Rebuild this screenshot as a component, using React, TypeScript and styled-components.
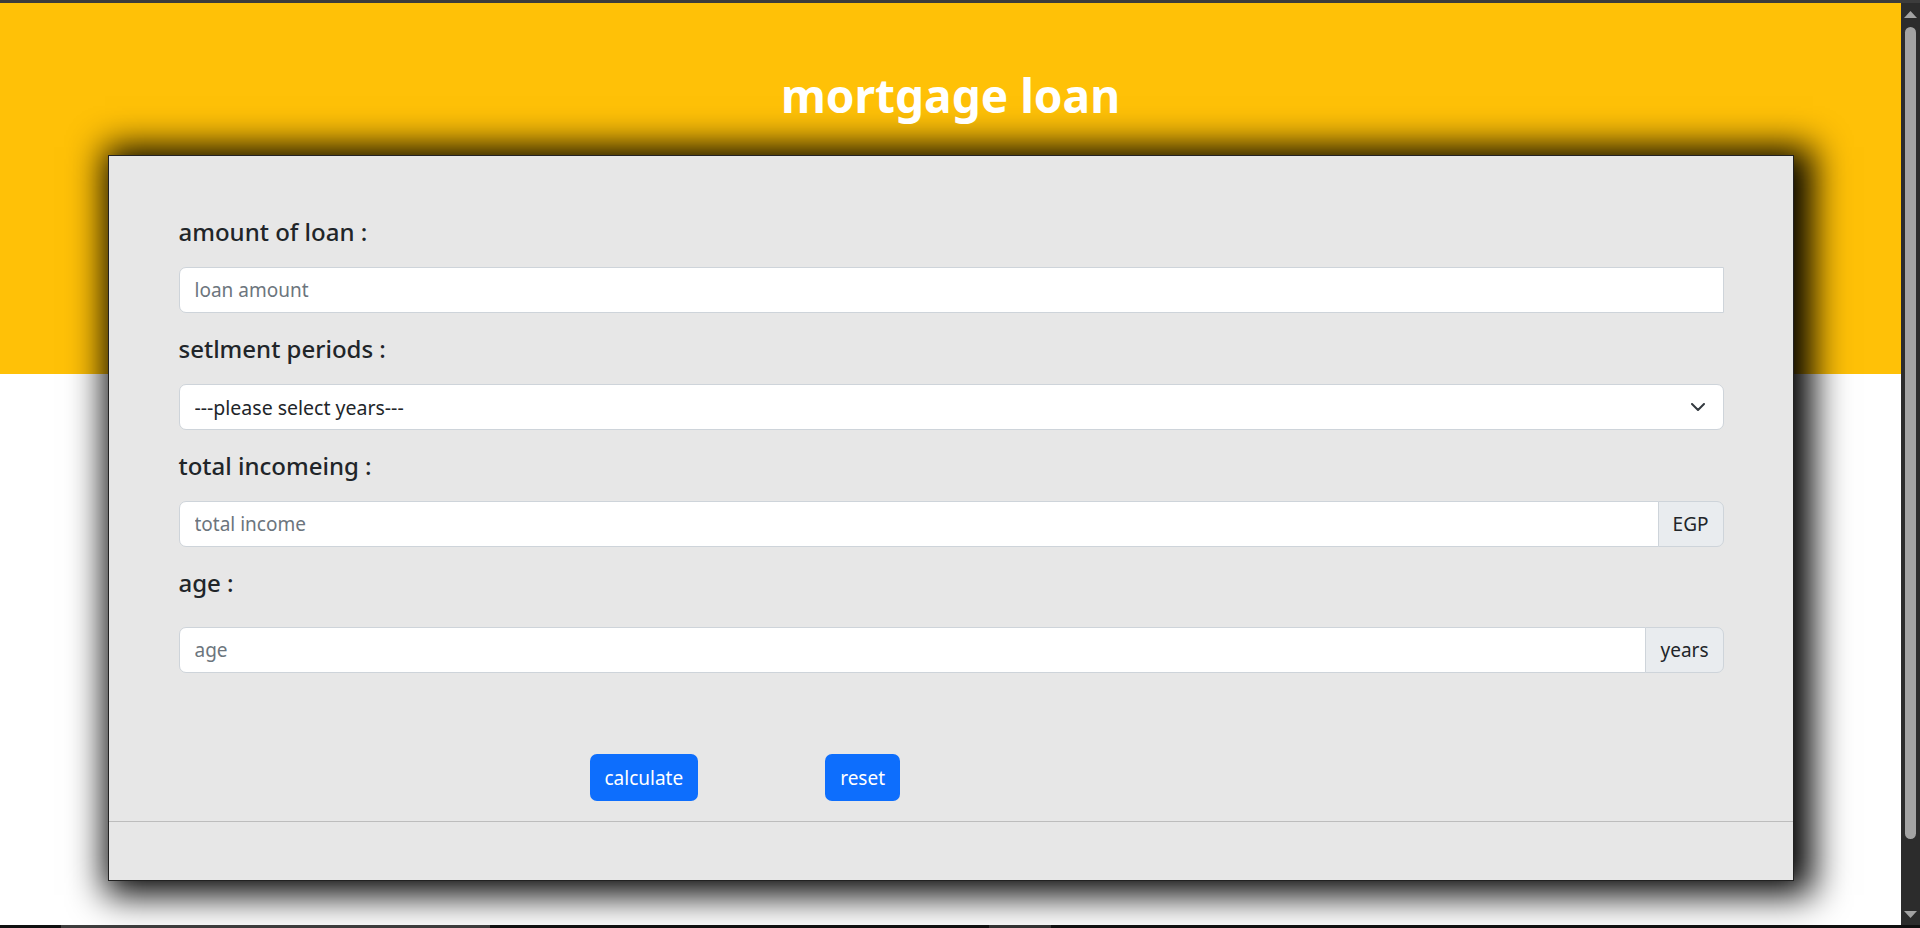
import React from "react";
import styled, { createGlobalStyle } from "styled-components";

const FONT = `"Noto Sans", "Open Sans", "Liberation Sans", sans-serif`;

const GlobalStyle = createGlobalStyle`
  html, body {
    margin: 0;
    padding: 0;
    background: #ffffff;
    overflow: hidden;
  }
  body {
    font-family: ${FONT};
    color: #212529;
  }
  * { box-sizing: border-box; }
`;

const Page = styled.div`
  width: calc(100% - 19px);
  height: 100vh;
  padding-top: 68px;
  background: linear-gradient(to bottom, #ffc107 0, #ffc107 374px, #ffffff 374px);
`;

const Title = styled.h1`
  margin: 0;
  text-align: center;
  font-family: ${FONT};
  font-weight: 700;
  font-size: 46px;
  line-height: 55px;
  color: #ffffff;
`;

const Card = styled.section`
  width: 1686px;
  margin: 32px auto 0;
  border: 1px solid #222222;
  background: #e7e7e7;
  box-shadow: 8px 3px 34px 11px #000000;
`;

const CardBody = styled.form`
  display: flex;
  flex-direction: column;
  padding: 61px 69px 20px 70px;
`;

const Field = styled.div`
  display: flex;
  flex-direction: column;
  & + & {
    margin-top: 21px;
  }
`;

const Label = styled.label<{ $gap?: number }>`
  font-family: ${FONT};
  font-weight: 500;
  font-size: 24px;
  line-height: 29px;
  color: #212529;
  margin-bottom: ${(p) => p.$gap ?? 21}px;
`;

const InputGroup = styled.div`
  display: flex;
  height: 46px;
  position: relative;
`;

const TextInput = styled.input<{ $joined?: boolean }>`
  flex: 1;
  min-width: 0;
  height: 46px;
  border: 1px solid #ced4da;
  border-radius: ${(p) => (p.$joined ? "7px 0 0 7px" : "7px")};
  background: #ffffff;
  padding: 0 15px;
  font-family: ${FONT};
  font-size: 19px;
  color: #212529;
  outline: none;
  &::placeholder {
    color: #6c757d;
  }
`;

const Addon = styled.span`
  display: flex;
  align-items: center;
  margin-left: -1px;
  padding: 0 14px;
  border: 1px solid #ced4da;
  border-radius: 0 7px 7px 0;
  background: #e9ecef;
  font-family: ${FONT};
  font-size: 19px;
  color: #212529;
`;

const Select = styled.select`
  flex: 1;
  height: 46px;
  appearance: none;
  -webkit-appearance: none;
  border: 1px solid #ced4da;
  border-radius: 7px;
  background: #ffffff;
  padding: 0 15px;
  font-family: ${FONT};
  font-size: 19.5px;
  color: #212529;
  outline: none;
`;

const Chevron = styled.svg`
  position: absolute;
  right: 19px;
  top: 50%;
  transform: translateY(-50%);
  pointer-events: none;
`;

const ButtonRow = styled.div`
  display: flex;
  gap: 127px;
  margin-top: 81px;
  padding-left: 411px;
`;

const Button = styled.button`
  height: 47px;
  padding: 0 15px;
  border: none;
  border-radius: 7px;
  background: #0d6efd;
  color: #ffffff;
  font-family: ${FONT};
  font-size: 19px;
  cursor: pointer;
`;

const Footer = styled.footer`
  height: 59px;
  border-top: 1px solid #bdbdbd;
`;

const TopBar = styled.div`
  position: fixed;
  left: 0;
  top: 0;
  right: 0;
  height: 3px;
  background: #3c3c3c;
  z-index: 10;
`;

const Scrollbar = styled.div`
  position: fixed;
  top: 3px;
  right: 0;
  bottom: 3px;
  width: 19px;
  background: #2c2c2c;
  z-index: 10;
`;

const ScrollArrow = styled.svg<{ $pos: "top" | "bottom" }>`
  position: absolute;
  left: 3px;
  ${(p) => (p.$pos === "top" ? "top: 8px;" : "bottom: 7px;")}
`;

const Thumb = styled.div`
  position: absolute;
  left: 4px;
  top: 24px;
  width: 11px;
  height: 812px;
  border-radius: 6px;
  background: #a3a3a3;
`;

const BottomBar = styled.div`
  position: fixed;
  left: 0;
  right: 0;
  bottom: 0;
  height: 3px;
  background: #101010;
  z-index: 11;
`;

const BarSegment = styled.div<{ $left: number; $width: number; $color: string }>`
  position: absolute;
  top: 0;
  height: 3px;
  left: ${(p) => p.$left}px;
  width: ${(p) => p.$width}px;
  background: ${(p) => p.$color};
`;

export default function App() {
  return (
    <>
      <GlobalStyle />
      <TopBar />
      <Page>
        <Title>mortgage loan</Title>
        <Card>
          <CardBody onSubmit={(e) => e.preventDefault()}>
            <Field>
              <Label htmlFor="loan">amount of loan :</Label>
              <InputGroup>
                <TextInput id="loan" $joined placeholder="loan amount" />
              </InputGroup>
            </Field>
            <Field>
              <Label htmlFor="period">setlment periods :</Label>
              <InputGroup>
                <Select id="period" defaultValue="">
                  <option value="">---please select years---</option>
                  <option value="5">5</option>
                  <option value="10">10</option>
                  <option value="15">15</option>
                  <option value="20">20</option>
                </Select>
                <Chevron width="14" height="8" viewBox="0 0 14 8" fill="none">
                  <path
                    d="M1 1l6 6 6-6"
                    stroke="#343a40"
                    strokeWidth="2"
                    strokeLinecap="round"
                    strokeLinejoin="round"
                  />
                </Chevron>
              </InputGroup>
            </Field>
            <Field>
              <Label htmlFor="income">total incomeing :</Label>
              <InputGroup>
                <TextInput id="income" $joined placeholder="total income" />
                <Addon>EGP</Addon>
              </InputGroup>
            </Field>
            <Field>
              <Label htmlFor="age" $gap={30}>
                age :
              </Label>
              <InputGroup>
                <TextInput id="age" $joined placeholder="age" />
                <Addon>years</Addon>
              </InputGroup>
            </Field>
            <ButtonRow>
              <Button type="button">calculate</Button>
              <Button type="reset">reset</Button>
            </ButtonRow>
          </CardBody>
          <Footer />
        </Card>
      </Page>
      <Scrollbar>
        <ScrollArrow $pos="top" width="13" height="7" viewBox="0 0 13 7">
          <path d="M6.5 0L13 7H0z" fill="#a3a3a3" />
        </ScrollArrow>
        <Thumb />
        <ScrollArrow $pos="bottom" width="13" height="7" viewBox="0 0 13 7">
          <path d="M0 0h13L6.5 7z" fill="#a3a3a3" />
        </ScrollArrow>
      </Scrollbar>
      <BottomBar>
        <BarSegment $left={61} $width={429} $color="#3d3d3d" />
        <BarSegment $left={989} $width={62} $color="#333333" />
      </BottomBar>
    </>
  );
}
